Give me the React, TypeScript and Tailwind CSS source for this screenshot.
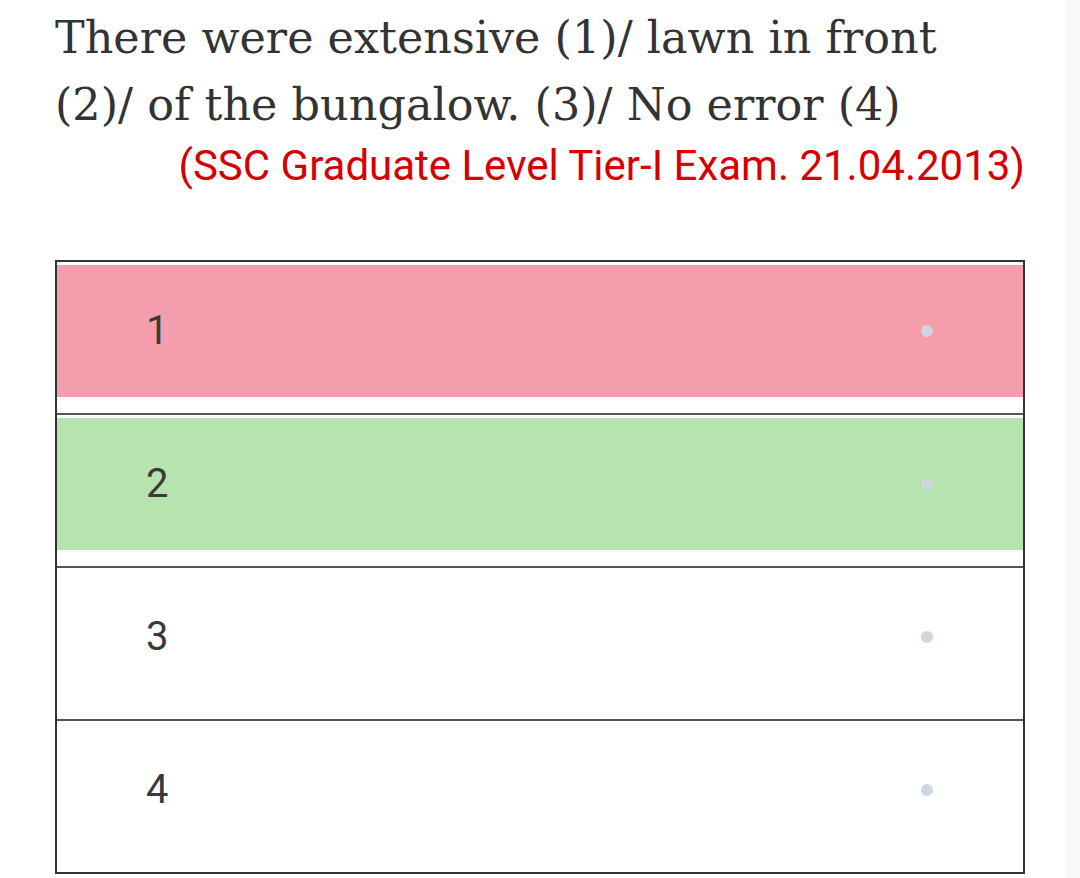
const options = [
  { label: "1", bg: "bg-[#f49dac]" },
  { label: "2", bg: "bg-[#b7e3ae]" },
  { label: "3", bg: "bg-white" },
  { label: "4", bg: "bg-white" },
];

export default function App() {
  return (
    <div className="flex min-h-[878px] bg-white">
      <div className="w-[1066px] pl-[55px] pr-[41px] pt-[4px]">
        <h1 className="font-['DejaVu_Serif',serif] text-[44.5px] leading-[67px] text-[#333333] font-normal">
          There were extensive (1)/ lawn in front
          <br />
          (2)/ of the bungalow. (3)/ No error (4)
        </h1>
        <p className="mt-[3px] text-right font-['Roboto',sans-serif] text-[42px] leading-[50px] text-[#d60000]">
          (SSC Graduate Level Tier-I Exam. 21.04.2013)
        </p>

        <div className="mt-[69px] border-2 border-[#333333]">
          {options.map((opt, i) => (
            <div
              key={opt.label}
              className={i === 0 ? "h-[151px] pt-[3px]" : "h-[153px] pt-[3px] border-t-2 border-[#555555]"}
            >
              <div className={`${opt.bg} h-[132px] flex items-center justify-between pl-[89px] pr-[90px]`}>
                <span className="font-['Roboto',sans-serif] text-[40px] text-[#3a3a3a]">{opt.label}</span>
                <span className="w-3 h-3 rounded-full bg-[#cfd6dd]" />
              </div>
            </div>
          ))}
        </div>
      </div>
      <div className="flex-1 bg-[#f8f8f8]" />
    </div>
  );
}
